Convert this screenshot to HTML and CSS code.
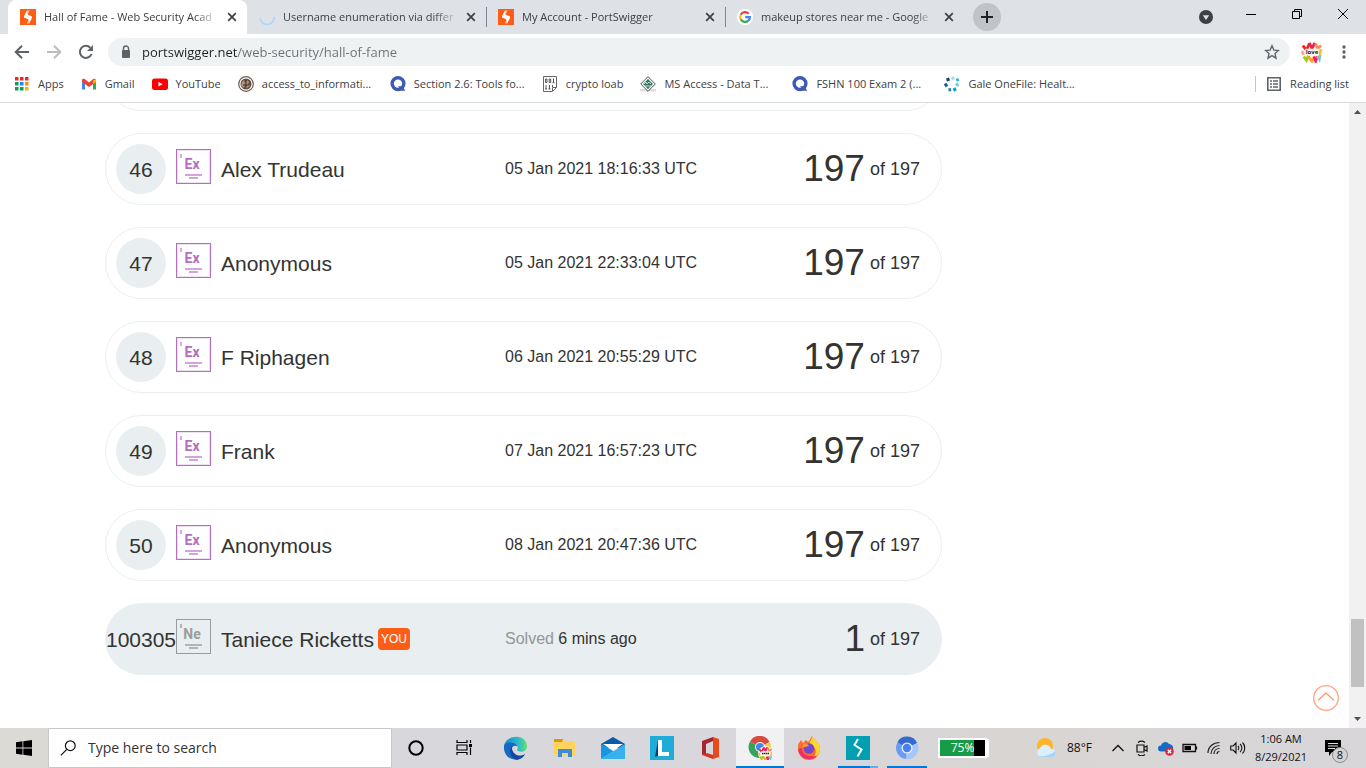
FILE: index.html
```html
<!DOCTYPE html>
<html lang="en">
<head>
<meta charset="utf-8">
<title>Hall of Fame - Web Security Academy</title>
<link rel="stylesheet" href="styles.css">
</head>
<body>
<svg class="defs" aria-hidden="true">
  <symbol id="i-swig" viewBox="0 0 16 16"><rect width="16" height="16" fill="#ff5c16"/><path d="M7 1.500H9.500L7.500 5.500 12 7.500V9L9 14.500H6.800L8.600 10.500 4 8.500V7Z" fill="#fff"/><path d="M8 1v4M8 11v4" stroke="#ff5c16" stroke-width=".6"/></symbol>
  <symbol id="i-close" viewBox="0 0 16 16"><path d="M4.200 4.200l7.600 7.600M11.800 4.200l-7.600 7.600" stroke="#3c4043" stroke-width="1.700"/></symbol>
  <symbol id="i-q" viewBox="0 0 16 16"><circle cx="8" cy="7.600" r="5.900" fill="none" stroke="#3c59b4" stroke-width="3.400"/><path d="M8 10.200h4l3.400 4.600h-4Z" fill="#3c59b4"/></symbol>
  <symbol id="i-love" viewBox="0 0 24 24"><circle cx="12" cy="12" r="12" fill="#fff8ee"/><g fill="none" stroke-width="3"><path d="M2 5l4 5 3-7" stroke="#e22"/><path d="M9 2l3 6 3-6" stroke="#e91e63"/><path d="M16 3l2 5 4-3" stroke="#f58a5b"/><path d="M1 11l2 4" stroke="#f5a69b"/><path d="M22 9l-2 6" stroke="#f3c52d"/><path d="M3 17l3 4 2-5" stroke="#a9c814"/><path d="M8 17l4 5 3-5" stroke="#f7a42b"/><path d="M14 17l2 5 2-5" stroke="#f0246d"/><path d="M18 17l2 3 1-5" stroke="#7ec7c1"/></g><rect x="4.500" y="8.500" width="15" height="6.500" fill="#fff5e8"/></symbol>
</svg>

<header class="browser">
  <div class="tabstrip">
    <nav class="tabs" aria-label="Tabs">
      <div class="tab tab-active"><svg class="ico16"><use href="#i-swig"/></svg><span class="tab-title">Hall of Fame - Web Security Acad</span><button class="tab-close" aria-label="Close tab"><svg class="ico16"><use href="#i-close"/></svg></button></div>
      <div class="tab"><svg class="ico16" viewBox="0 0 16 16"><path d="M15 8A7 7 0 0 1 1 9" fill="none" stroke="#b5d5fb" stroke-width="2"/></svg><span class="tab-title">Username enumeration via differ</span><button class="tab-close" aria-label="Close tab"><svg class="ico16"><use href="#i-close"/></svg></button></div>
      <div class="tab tab-split"><svg class="ico16"><use href="#i-swig"/></svg><span class="tab-title">My Account - PortSwigger</span><button class="tab-close" aria-label="Close tab"><svg class="ico16"><use href="#i-close"/></svg></button></div>
      <div class="tab tab-split"><svg class="ico16" viewBox="0 0 16 16"><circle cx="8" cy="8" r="8" fill="#fff"/><g fill="none" stroke-width="2.200"><path d="M11.700 4.800A4.900 4.900 0 0 0 3.700 5.700" stroke="#ea4335"/><path d="M3.700 5.700a4.900 4.900 0 0 0 0 4.600" stroke="#fbbc05"/><path d="M3.700 10.300a4.900 4.900 0 0 0 7.600 1.300" stroke="#34a853"/><path d="M11.300 11.600A4.900 4.900 0 0 0 12.900 8.100H8.200" stroke="#4285f4"/></g></svg><span class="tab-title">makeup stores near me - Google</span><button class="tab-close" aria-label="Close tab"><svg class="ico16"><use href="#i-close"/></svg></button></div>
      <button class="new-tab" aria-label="New tab"><svg viewBox="0 0 28 28"><path d="M14 8v12M8 14h12" stroke="#202124" stroke-width="2"/></svg></button>
    </nav>
    <div class="window-controls">
      <button aria-label="Search tabs"><svg class="ico16" viewBox="0 0 16 16"><circle cx="9" cy="9" r="7" fill="#3c4043"/><path d="M5.800 7.200h6.400L9 12Z" fill="#dee1e6"/></svg></button>
      <button aria-label="Minimize"><svg class="ico16" viewBox="0 0 16 16"><path d="M3 6.500h10" stroke="#000"/></svg></button>
      <button aria-label="Restore"><svg class="ico16" viewBox="0 0 16 16"><path d="M3.500 3.500h7v7h-7zM5.500 3.500v-2h7v7h-2" fill="none" stroke="#000"/></svg></button>
      <button aria-label="Close"><svg class="ico16" viewBox="0 0 16 16"><path d="M3 1l10 10M13 1L3 11" stroke="#000"/></svg></button>
    </div>
  </div>

  <div class="toolbar">
    <button class="nav-btn" aria-label="Back"><svg class="ico16" viewBox="0 0 16 16"><path d="M15 8H2M8 1.700 1.700 8 8 14.300" fill="none" stroke="#5f6368" stroke-width="2"/></svg></button>
    <button class="nav-btn" aria-label="Forward"><svg class="ico16" viewBox="0 0 16 16"><path d="M1 8h13M8 1.700 14.300 8 8 14.300" fill="none" stroke="#babcbe" stroke-width="2"/></svg></button>
    <button class="nav-btn" aria-label="Reload"><svg class="ico16" viewBox="0 0 16 16"><path d="M13.500 10A6 6 0 1 1 12.300 3.800" fill="none" stroke="#5f6368" stroke-width="2"/><path d="M15 1v6H9Z" fill="#5f6368"/></svg></button>
    <div class="omnibox">
      <svg class="ico16" viewBox="0 0 16 16"><rect x="4" y="6" width="8" height="8" rx="1" fill="#5f6368"/><path d="M5.500 6.500V4.500a2.500 2.500 0 0 1 5 0v2" fill="none" stroke="#5f6368" stroke-width="1.400"/></svg>
      <input class="url" type="text" aria-label="Address" value="portswigger.net/web-security/hall-of-fame">
      <button class="star" aria-label="Bookmark this page"><svg class="ico16" viewBox="0 0 16 16"><path d="M8 1.800l1.900 4.300 4.600.4-3.500 3.100 1 4.600L8 11.700l-4 2.500 1-4.600L1.500 6.500l4.600-.4Z" fill="none" stroke="#5f6368" stroke-width="1.400"/></svg></button>
    </div>
    <button class="avatar" aria-label="Profile"><svg viewBox="0 0 24 24"><use href="#i-love"/></svg><span>love</span></button>
    <button class="nav-btn" aria-label="Menu"><svg class="ico16" viewBox="0 0 16 16"><g fill="#5f6368"><circle cx="8" cy="3" r="1.700"/><circle cx="8" cy="8" r="1.700"/><circle cx="8" cy="13" r="1.700"/></g></svg></button>
  </div>

  <nav class="bookmarks" aria-label="Bookmarks">
    <a href="#"><svg class="ico16" viewBox="0 0 16 16"><path d="M1 1h3.500v3.500H1zM6 1h3.500v3.500H6zM11 1h3.500v3.500H11z" fill="#ea2a1f"/><path d="M1 6h3.500v3.500H1zM1 11h3.500v3.500H1zM6 11h3.500v3.500H6z" fill="#0f9d58"/><path d="M6 6h3.500v3.500H6z" fill="#1e88f5"/><path d="M11 6h3.500v3.500H11z" fill="#fb8c00"/><path d="M11 11h3.500v3.500H11z" fill="#fbb300"/></svg>Apps</a>
    <a href="#"><svg class="ico16" viewBox="0 0 16 16"><path d="M1 4v9.500h3V6Z" fill="#4285f4"/><path d="M12 6v7.500h3V4Z" fill="#34a853"/><path d="M1 3.500 3 2.500l5 4 5-4 2 1V6L8 11 1 6Z" fill="#ea4335"/><path d="M12 4.500l3-1.500v3l-3 2Z" fill="#fbbc04"/></svg>Gmail</a>
    <a href="#"><svg class="ico16" viewBox="0 0 16 16"><rect y="2.500" width="16" height="11.500" rx="2.500" fill="#f00"/><path d="M6.500 5.800v4.800L10.500 8.200Z" fill="#fff"/></svg>YouTube</a>
    <a href="#" class="bm-wide"><svg class="ico16" viewBox="0 0 16 16"><circle cx="8" cy="8" r="7.300" fill="#fff" stroke="#6b5b50" stroke-width="1.200"/><circle cx="8" cy="8" r="5.500" fill="#6b4b3b"/><path d="M4 6l2-2 1 3 2-3 2 2-1 2 2 2-3 2-2-2-2 2-2-3Z" fill="#b19584"/><path d="M5 9h6M8 4v7" stroke="#332823"/></svg>access_to_informati...</a>
    <a href="#" class="bm-wide"><svg class="ico16"><use href="#i-q"/></svg>Section 2.6: Tools fo...</a>
    <a href="#"><svg class="ico16" viewBox="0 0 16 16"><path d="M1.500.5h13v11l-4 4h-9zM10.500 15v-3.500h4" fill="#fff" stroke="#666"/><g fill="none" stroke="#444" stroke-width=".9"><path d="M3.500 3h1.500v3.500H3.500zM7.200 3h1.500v3.500H7.200zM11.500 2.500v4.200M10.500 6.700h2M4 9v4M3 13h2M7.500 9v4M6.500 13h2M10.500 9v2"/></g></svg>crypto loab</a>
    <a href="#" class="bm-wide"><svg class="ico16" viewBox="0 0 16 16"><path d="M0 13h16v2.500H0z" fill="#dedede"/><path d="M8 .7 15.300 8 8 15.300.7 8Z" fill="#fff" stroke="#555"/><path d="M8 3l5 5-5 5-5-5Z" fill="#347a62"/><path d="M4 8l2-2 1 2 2-2 2 2M5 10h6" fill="none" stroke="#c4dcd4"/></svg>MS Access - Data T...</a>
    <a href="#" class="bm-wide"><svg class="ico16"><use href="#i-q"/></svg>FSHN 100 Exam 2 (...</a>
    <a href="#" class="bm-wide"><svg class="ico16" viewBox="0 0 16 16"><g stroke-width="3" fill="none"><path d="M8 .8l1.800 3" stroke="#a6e0f2"/><path d="M12.300 4.300l2.500-1" stroke="#2fafd8"/><path d="M12 7.500l2.500 2.500" stroke="#71cdea"/><path d="M10 12l1.500 3" stroke="#0b9cd0"/><path d="M4.500 14l2.500-.5" stroke="#0b88b5"/><path d="M1 7.500l2 3" stroke="#14618a"/><path d="M2.500 4l3-1" stroke="#10436a"/></g></svg>Gale OneFile: Healt...</a>
    <a href="#" class="reading"><svg class="ico16" viewBox="0 0 16 16"><path d="M1.800 1.800h12.400v12.400H1.800z" fill="none" stroke="#5f6368" stroke-width="1.600"/><path d="M4 5h2M7 5h5M4 8h2M7 8h5M4 11h2M7 11h5" stroke="#5f6368" stroke-width="1.500"/></svg>Reading list</a>
  </nav>
</header>

<div class="viewport">
  <main class="page">
    <ol class="ranking">
      <li class="entry"></li>
      <li class="entry"><span class="rank">46</span><span class="level">Ex</span><span class="name">Alex Trudeau</span><time class="when">05 Jan 2021 18:16:33 UTC</time><span class="score"><b>197</b>of 197</span></li>
      <li class="entry"><span class="rank">47</span><span class="level">Ex</span><span class="name">Anonymous</span><time class="when">05 Jan 2021 22:33:04 UTC</time><span class="score"><b>197</b>of 197</span></li>
      <li class="entry"><span class="rank">48</span><span class="level">Ex</span><span class="name">F Riphagen</span><time class="when">06 Jan 2021 20:55:29 UTC</time><span class="score"><b>197</b>of 197</span></li>
      <li class="entry"><span class="rank">49</span><span class="level">Ex</span><span class="name">Frank</span><time class="when">07 Jan 2021 16:57:23 UTC</time><span class="score"><b>197</b>of 197</span></li>
      <li class="entry"><span class="rank">50</span><span class="level">Ex</span><span class="name">Anonymous</span><time class="when">08 Jan 2021 20:47:36 UTC</time><span class="score"><b>197</b>of 197</span></li>
      <li class="entry entry-you"><span class="rank">100305</span><span class="level level-new">Ne</span><span class="name">Taniece Ricketts<em class="you">YOU</em></span><span class="when"><i>Solved</i> 6 mins ago</span><span class="score"><b>1</b>of 197</span></li>
    </ol>
    <button class="to-top" aria-label="Back to top"><svg viewBox="0 0 26 26"><circle cx="13" cy="13" r="12.300" fill="none" stroke="#ffa582" stroke-width="1.300"/><path d="M5 15.500l8-7.500 8 7.500" fill="none" stroke="#ff9e78" stroke-width="1.300"/></svg></button>
  </main>
  <div class="scrollbar" aria-hidden="true">
    <svg viewBox="0 0 17 17"><path d="M8.500 7 12 11H5Z" fill="#505050"/></svg>
    <div class="thumb"></div>
    <svg viewBox="0 0 17 17"><path d="M5 6h7L8.500 10Z" fill="#505050"/></svg>
  </div>
</div>

<footer class="taskbar">
  <button class="start" aria-label="Start"><svg class="ico16" viewBox="0 0 16 16"><path d="M0 2.300 6.500 1.300V7.600H0zM7.300 1.200 16 0V7.600H7.300zM0 8.400h6.500v6.300L0 13.800zM7.300 8.400H16V16l-8.700-1.200z"/></svg></button>
  <label class="search"><svg class="ico16" viewBox="0 0 16 16"><circle cx="10.300" cy="5.700" r="4.900" fill="none" stroke="#111" stroke-width="1.200"/><path d="M6.800 9.300.8 15.400" stroke="#111" stroke-width="1.200"/></svg><input type="text" aria-label="Search" placeholder="Type here to search"></label>
  <nav class="apps" aria-label="Apps">
    <button aria-label="Cortana"><svg viewBox="0 0 24 24"><circle cx="11" cy="12" r="6.700" fill="none" stroke="#000" stroke-width="2"/></svg></button>
    <button aria-label="Task View"><svg viewBox="0 0 24 24"><path d="M3 4v2.500h10V4M3 19v-2.500h10V19M3 9h10v5H3zM16.500 4v3M16.500 11.500V19" fill="none" stroke="#000" stroke-width="1.200"/><path d="M15 8h3v3h-3z"/></svg></button>
    <button aria-label="Edge"><svg viewBox="0 0 24 24"><defs><linearGradient id="eg"><stop offset="0" stop-color="#1389d5"/><stop offset=".6" stop-color="#24bccb"/><stop offset="1" stop-color="#67df70"/></linearGradient></defs><path d="M1 12C0-1 23-4 24 10c0 5-5 7-9 5-2-1 0-2 0-4C15 6 3 4 1 12Z" fill="url(#eg)"/><path d="M1 10c3-6 13-4 14 1-5-4-9 3-4 7 4 4 9 2 11 0-6 10-22 6-21-8Z" fill="#176ac4"/><path d="M9 10c-4 5-1 13 5 14 4-1 7-3 8-6-6 4-14 0-13-8Z" fill="#1048a0"/></svg></button>
    <button aria-label="File Explorer"><svg viewBox="0 0 24 24"><path d="M2 3h9l2 2h10v15H2Z" fill="#ffd35c"/><path d="M2 3h9l-1 3H2Z" fill="#dc9800"/><path d="M6 21v-8h14v8h-4v-4h-6v4Z" fill="#3c8bd9"/></svg></button>
    <button aria-label="Mail"><svg viewBox="0 0 24 24"><path d="M0 8 12 1l12 7v4H0Z" fill="#0a5aa8"/><path d="M0 8l13 7L0 23Z" fill="#1598e4"/><path d="M24 8v15H0Z" fill="#35b1ee"/><path d="M2 8h20l-10 7Z" fill="#fff"/></svg></button>
    <button aria-label="Lenovo"><svg viewBox="0 0 24 24"><path d="M0 0h24v24H0z" fill="#20acd8"/><path d="M8 4h4v12h7v4H8Z" fill="#fff"/><path d="M8 4v16l-3 1Z" fill="#063e6a"/></svg></button>
    <button aria-label="Office"><svg viewBox="0 0 24 24"><path d="M3 5 14 1v4L7 8v10l-4 1Z" fill="#a82432"/><path d="M14 1l6 2v18l-6 2Z" fill="#e84a1b"/><path d="M3 19l5-2 6 2v4Z" fill="#d83420"/></svg></button>
    <button class="app-active" aria-label="Chrome"><svg viewBox="0 0 24 24"><path d="M12 11 2 5.500A11 11 0 0 1 21.500 6Z" fill="#d94a3f"/><path d="M12 11 2 5.500A11 11 0 0 0 11 22Z" fill="#39a35a"/><path d="M12 11l9.500-5A11 11 0 0 1 11 22Z" fill="#f7c83e"/><circle cx="12" cy="11" r="5" fill="#fff"/><circle cx="12" cy="11" r="4" fill="#4285f4"/><use href="#i-love" x="10" y="10" width="15" height="15"/><path d="M14 17.500h7" stroke="#222" stroke-width="1.500" stroke-dasharray="1.500 .5"/></svg></button>
    <button aria-label="Firefox"><svg viewBox="0 0 24 24"><path d="M2 7l2-3 2 3 3-3 2 2c2-1 2-4 4-6 2 5 8 6 8 13a11 11 0 0 1-22 0C1 10 1 8 2 7Z" fill="#ff6b2c"/><path d="M15 0c2 5 8 6 8 13 0 5-4 8-7 9 5-5 3-12-3-13-2-2 2-5 2-9Z" fill="#ffd62b"/><path d="M1 13c1 9 12 14 19 7-8 1-15 0-15-8Z" fill="#ed2f67"/><circle cx="12" cy="12.500" r="5.300" fill="#7447cf"/><path d="M6 8c3-1 5 0 6 2-3 0-4 2-6 1Z" fill="#ff9a2c"/></svg></button>
    <button class="app-open app-stacked" aria-label="Burp Suite"><svg viewBox="0 0 24 24"><path d="M0 0h24v24H0z" fill="#00a0b2"/><path d="M12 3 8.500 9 15.500 13.500 11.500 20.500" fill="none" stroke="#fff" stroke-width="2"/></svg></button>
    <button class="app-open" aria-label="Chromium"><svg viewBox="0 0 24 24"><circle cx="12" cy="12" r="11" fill="#699cf5"/><path d="M12 12 2.500 6A11 11 0 0 1 22 7Z" fill="#3569cf"/><path d="M12 12l10-5a11 11 0 0 1-11 16Z" fill="#a6c7fa"/><circle cx="12" cy="12" r="5.500" fill="#e8f0fe"/><circle cx="12" cy="12" r="4.200" fill="#4a80e8"/></svg></button>
  </nav>
  <div class="battery"><span>75%</span></div>
  <div class="tray">
    <button class="weather"><svg viewBox="0 0 24 24"><circle cx="11" cy="10" r="8" fill="#fdb62c"/><path d="M6 21a5 5 0 0 1 0-9 6 6 0 0 1 11 1 4 4 0 0 1 1 8Z" fill="#dceffd"/><path d="M4 20c5 1 13-1 17-5 2 3 0 6-3 6H6Z" fill="#a8d4f5"/></svg>88°F</button>
    <button aria-label="Show hidden icons"><svg class="ico16" viewBox="0 0 16 16"><path d="M2.500 11 8 5.500l5.500 5.500" fill="none" stroke="#111" stroke-width="1.300"/></svg></button>
    <button aria-label="Meet Now"><svg class="ico16" viewBox="0 0 16 16"><path d="M3 5h7v7H3zM10 7.500l3-1.500v5l-3-1.500M4 2.500c2-1.500 5-1.500 7 0M4 14.500c2 1.500 5 1.500 7 0" fill="none" stroke="#111" stroke-width="1.200"/></svg></button>
    <button aria-label="OneDrive"><svg class="ico16" viewBox="0 0 16 16"><path d="M3 11.500a3 3 0 0 1 0-6 4.500 4.500 0 0 1 8-1.500 4 4 0 0 1 4 5v2.500Z" fill="#126cc5"/><circle cx="11.500" cy="11.500" r="4.300" fill="#d6293b"/><path d="M9.800 9.800l3.400 3.400M13.200 9.800l-3.400 3.400" stroke="#fff" stroke-width="1.300"/></svg></button>
    <button aria-label="Power"><svg class="ico16" viewBox="0 0 16 16"><path d="M1 4.500h12.500v7H1zM14.500 6.500v3" fill="none" stroke="#111" stroke-width="1.300"/><path d="M2.500 6H9v4H2.500z"/></svg></button>
    <button aria-label="Network"><svg class="ico16" viewBox="0 0 16 16"><path d="M2 13C2 7 7 2.500 13.500 2.500M5 14c0-5 4-8.500 8.500-8.500M8 14c0-3 2-5.500 5.500-5.500M11 14c0-2 1-2.500 2.500-2.500" fill="none" stroke="#222" stroke-width="1.200"/></svg></button>
    <button aria-label="Volume"><svg class="ico16" viewBox="0 0 16 16"><path d="M.7 6h2.500L6 3v10L3.200 10H.7zM8 6c1 1 1 3 0 4M10 4c2.500 2 2.500 6 0 8M12.500 2.500c3 3 3 8 0 11" fill="none" stroke="#111" stroke-width="1.100"/></svg></button>
  </div>
  <button class="clock"><span>1:06 AM</span><span>8/29/2021</span></button>
  <button class="notices" aria-label="Notifications"><svg class="ico16" viewBox="0 0 16 16"><path d="M0 0h16v12H7l-3 4v-4H0z"/><path d="M3 3.500h10M3 6h10M3 8.500h7" stroke="#ddd"/></svg><span>8</span></button>
</footer>
</body>
</html>
```
FILE: styles.css
```css
* { box-sizing: border-box; }
html, body { height: 100%; }
body {
  margin: 0;
  display: flex;
  flex-direction: column;
  overflow: hidden;
  background: #fff;
  color: #3c4043;
  font: 11px/16px "Open Sans", "Noto Sans", sans-serif;
}
button {
  padding: 0;
  border: 0;
  background: none;
  color: inherit;
  font: inherit;
  display: flex;
  align-items: center;
  justify-content: center;
}
a { color: inherit; text-decoration: none; }
svg { display: block; flex: none; }
.defs { position: absolute; width: 0; height: 0; }
.ico16 { width: 16px; height: 16px; }

/* Tab strip */
.browser { flex: none; border-bottom: 1px solid #d8dadf; }
.tabstrip {
  display: flex;
  height: 34px;
  background: #dee1e6;
}
.tabs { display: flex; flex: 1; padding-left: 8px; min-width: 0; align-items: center; }
.tab {
  flex: 0 1 239px;
  min-width: 0;
  height: 34px;
  padding: 0 7px 0 12px;
  display: flex;
  align-items: center;
  gap: 8px;
}
.tab-active { background: #fff; border-radius: 8px 8px 0 0; }
.tab-split {
  background: linear-gradient(#80868b, #80868b) left center / 1px 20px no-repeat;
}
.tab-title {
  flex: 1;
  min-width: 0;
  overflow: hidden;
  white-space: nowrap;
  -webkit-mask-image: linear-gradient(to left, transparent, #000 24px);
  mask-image: linear-gradient(to left, transparent, #000 24px);
}
.tab-close { width: 16px; height: 16px; margin-left: -3px; }
.new-tab {
  width: 28px;
  height: 28px;
  margin-left: 9px;
  border-radius: 50%;
  background: #c0c3c7;
}
.new-tab svg { width: 28px; height: 28px; }
.window-controls { display: flex; }
.window-controls button { width: 46px; height: 32px; }

/* Toolbar */
.toolbar {
  display: flex;
  align-items: center;
  height: 36px;
  padding: 0 6px;
}
.nav-btn { width: 32px; height: 32px; }
.omnibox {
  flex: 1;
  display: flex;
  align-items: center;
  gap: 8px;
  height: 28px;
  margin: 0 6px;
  padding: 0 10px;
  border-radius: 14px;
  background: #eff2f3;
}
.url {
  flex: 1;
  min-width: 0;
  border: 0;
  padding: 0;
  outline: 0;
  font: 13px/20px "Open Sans", "Noto Sans", sans-serif;
  color: transparent;
  background: linear-gradient(to right, #202124 95px, #6b7074 95px);
  -webkit-background-clip: text;
  background-clip: text;
}
.avatar {
  position: relative;
  width: 32px;
  height: 32px;
}
.avatar svg { width: 22px; height: 22px; }
.avatar span {
  position: absolute;
  inset: 0;
  font: bold 6px/32px "Open Sans", sans-serif;
  color: #222;
  text-align: center;
}

/* Bookmarks */
.bookmarks {
  display: flex;
  align-items: center;
  gap: 17px;
  height: 32px;
  padding: 0 17px 4px 14px;
  white-space: nowrap;
}
.bookmarks a { display: flex; align-items: center; gap: 8px; }
.bookmarks .bm-wide { width: 135px; }
.bookmarks .reading {
  margin-left: auto;
  padding-left: 11px;
  background: linear-gradient(#c4c7ca, #c4c7ca) left center / 1px 16px no-repeat;
}

/* Page */
.viewport { flex: 1; min-height: 0; display: flex; }
.page {
  position: relative;
  flex: 1;
  min-width: 0;
  display: flex;
  flex-direction: column;
  justify-content: flex-end;
  overflow: hidden;
  padding: 0 407px 53px 105px;
  font-family: "Liberation Sans", Arial, sans-serif;
  color: #333332;
}
.ranking {
  list-style: none;
  margin: 0;
  padding: 0;
  display: grid;
  gap: 22px;
}
.entry {
  display: grid;
  grid-template-columns: 70px 45px 284fr 200fr 215fr;
  grid-template-rows: 70px;
  align-items: center;
  padding-right: 21px;
  border: 1px solid #e9eff1;
  border-radius: 36px;
  font-size: 21px;
  line-height: 24px;
  white-space: nowrap;
}
.entry-you { background: #e9eef0; }
.rank {
  justify-self: center;
  min-width: 50px;
  padding-top: 2px;
  border-radius: 25px;
  background: #e9eef0;
  text-align: center;
  line-height: 48px;
}
.level {
  width: 35px;
  height: 35px;
  margin-bottom: 5px;
  border: 1px solid #b76cc4;
  box-shadow: inset 0 0 0 1px #f0e0f3;
  color: #b76cc4;
  font: bold 14px/28px Roboto, sans-serif;
  text-align: center;
  padding-right: 3px;
  background:
    linear-gradient(#d9a9e0, #d9a9e0) 3px 4px / 2px 4px no-repeat,
    linear-gradient(#d5a2dd, #d5a2dd) 8px 24px / 17px 2px no-repeat,
    linear-gradient(#d5a2dd, #d5a2dd) 12px 27px / 9px 2px no-repeat;
}
.level-new {
  border-color: #969b9b;
  box-shadow: none;
  color: #999e9e;
  background:
    linear-gradient(#b0b5b5, #b0b5b5) 3px 4px / 2px 4px no-repeat,
    linear-gradient(#b0b5b5, #b0b5b5) 8px 24px / 17px 2px no-repeat,
    linear-gradient(#b0b5b5, #b0b5b5) 12px 27px / 9px 2px no-repeat;
}
.name { display: flex; align-items: center; gap: 4px; padding-top: 2px; }
.you {
  margin-bottom: 2px;
  padding: 0 3px;
  border-radius: 4px;
  background: #ff5c16;
  color: #fff;
  font: 12px/22px "Liberation Sans", Arial, sans-serif;
}
.when { font-size: 16px; }
.when i { font-style: normal; color: #929796; }
.score {
  display: flex;
  align-items: center;
  justify-content: flex-end;
  gap: 5px;
  font-size: 18px;
}
.score b { font-size: 37px; font-weight: normal; line-height: 44px; }
.to-top {
  position: absolute;
  right: 10px;
  bottom: 17px;
  width: 26px;
  height: 26px;
}
.to-top svg { width: 26px; height: 26px; }
.scrollbar {
  width: 17px;
  display: flex;
  flex-direction: column;
  background: #f1f1f1;
}
.scrollbar svg { width: 17px; height: 17px; }
.thumb { height: 68px; margin: auto 2px 24px; background: #c1c1c1; }

/* Taskbar */
.taskbar {
  flex: none;
  display: flex;
  align-items: center;
  height: 40px;
  padding-right: 4px;
  background: linear-gradient(to right, #dcdad4, #d8d7dc 30%, #d9d7dc 55%, #d8d5d3 75%, #d9d6da);
  color: #111;
}
.start { width: 48px; height: 40px; }
.search {
  flex: 0 1 344px;
  display: flex;
  align-items: center;
  gap: 12px;
  height: 40px;
  padding: 0 11px;
  border: 1px solid #c8c8cc;
  background: #fff;
}
.search input {
  flex: 1;
  min-width: 0;
  padding: 0;
  border: 0;
  outline: 0;
  background: none;
  font: 14px/20px "Open Sans", "Noto Sans", sans-serif;
}
.search input::placeholder { color: #333; opacity: 1; }
.apps { display: flex; gap: 1px; padding-left: 1px; }
.apps button { width: 48px; height: 40px; }
.apps svg { width: 24px; height: 24px; }
.app-active { background: #f1f0f2; box-shadow: inset 0 -2px #0078d7; }
.app-open { background: linear-gradient(#0078d7, #0078d7) center bottom / 40px 2px no-repeat; }
.app-stacked {
  background: linear-gradient(to right, #0078d7 32px, #69aee3 32px) center bottom / 40px 2px no-repeat;
}
.battery {
  width: 49px;
  margin-left: 7px;
  border: 2px solid #fff;
  background: linear-gradient(to right, #169b47 76%, #000 76%);
  box-shadow: 3px 0 0 -1px #fff;
  color: #fff;
  font-size: 12px;
  text-align: center;
}
.tray { display: flex; align-items: center; margin-left: auto; }
.tray button { width: 24px; height: 40px; }
.tray .weather { width: auto; gap: 9px; margin-right: 14px; font-size: 12px; }
.weather svg { width: 24px; height: 24px; }
.clock { width: 62px; flex-direction: column; line-height: 18px; }
.notices { position: relative; width: 50px; height: 40px; padding-right: 8px; }
.notices span {
  position: absolute;
  left: 20px;
  top: 19px;
  width: 16px;
  border: 1px solid #8b8b8b;
  border-radius: 50%;
  background: #d5d3d6;
  line-height: 14px;
}
```
